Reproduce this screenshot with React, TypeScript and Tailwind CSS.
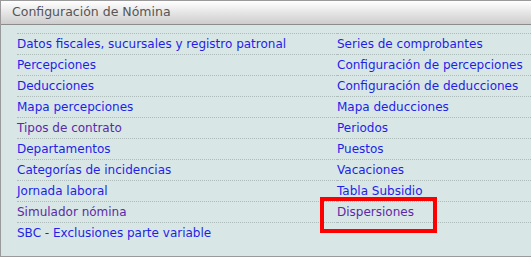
const LEFT = [
  { label: 'Datos fiscales, sucursales y registro patronal', visited: false },
  { label: 'Percepciones', visited: false },
  { label: 'Deducciones', visited: false },
  { label: 'Mapa percepciones', visited: false },
  { label: 'Tipos de contrato', visited: true },
  { label: 'Departamentos', visited: false },
  { label: 'Categorías de incidencias', visited: false },
  { label: 'Jornada laboral', visited: false },
  { label: 'Simulador nómina', visited: true },
  { label: 'SBC - Exclusiones parte variable', visited: false },
];

const RIGHT = [
  { label: 'Series de comprobantes', visited: false },
  { label: 'Configuración de percepciones', visited: false },
  { label: 'Configuración de deducciones', visited: false },
  { label: 'Mapa deducciones', visited: false },
  { label: 'Periodos', visited: false },
  { label: 'Puestos', visited: false },
  { label: 'Vacaciones', visited: false },
  { label: 'Tabla Subsidio', visited: false },
  { label: 'Dispersiones', visited: true },
  { label: '', visited: false },
];

function Cell({ label, visited, className }: { label: string; visited: boolean; className: string }) {
  return (
    <div className={`h-[21px] border-t border-dotted border-[#aebcbc] leading-[20px] ${className}`}>
      {label && (
        <a href="#" className={visited ? 'text-[#5c2aa8]' : 'text-[#1f1fe6]'}>
          {label}
        </a>
      )}
    </div>
  );
}

export default function App() {
  return (
    <div className="relative h-[257px] w-[531px] border-y border-l border-[#9a9a9a] font-['DejaVu_Sans',sans-serif]">
      <div className="flex h-[24px] items-center border-b border-[#8c8c8c] bg-gradient-to-b from-white to-[#cdcdcd] pl-[11px] text-[12.5px] text-[#555]">
        Configuración de Nómina
      </div>
      <div className="h-[231px] bg-[#d8e6e6] pl-4 pt-[8px] text-[12px]">
        {LEFT.map((item, i) => (
          <div key={item.label} className="flex">
            <Cell label={item.label} visited={item.visited} className="w-[320px]" />
            <Cell label={RIGHT[i].label} visited={RIGHT[i].visited} className="flex-1" />
          </div>
        ))}
      </div>
      <div className="pointer-events-none absolute left-[319px] top-[196px] h-[36px] w-[117px] border-4 border-[#ff0000]" />
    </div>
  );
}
